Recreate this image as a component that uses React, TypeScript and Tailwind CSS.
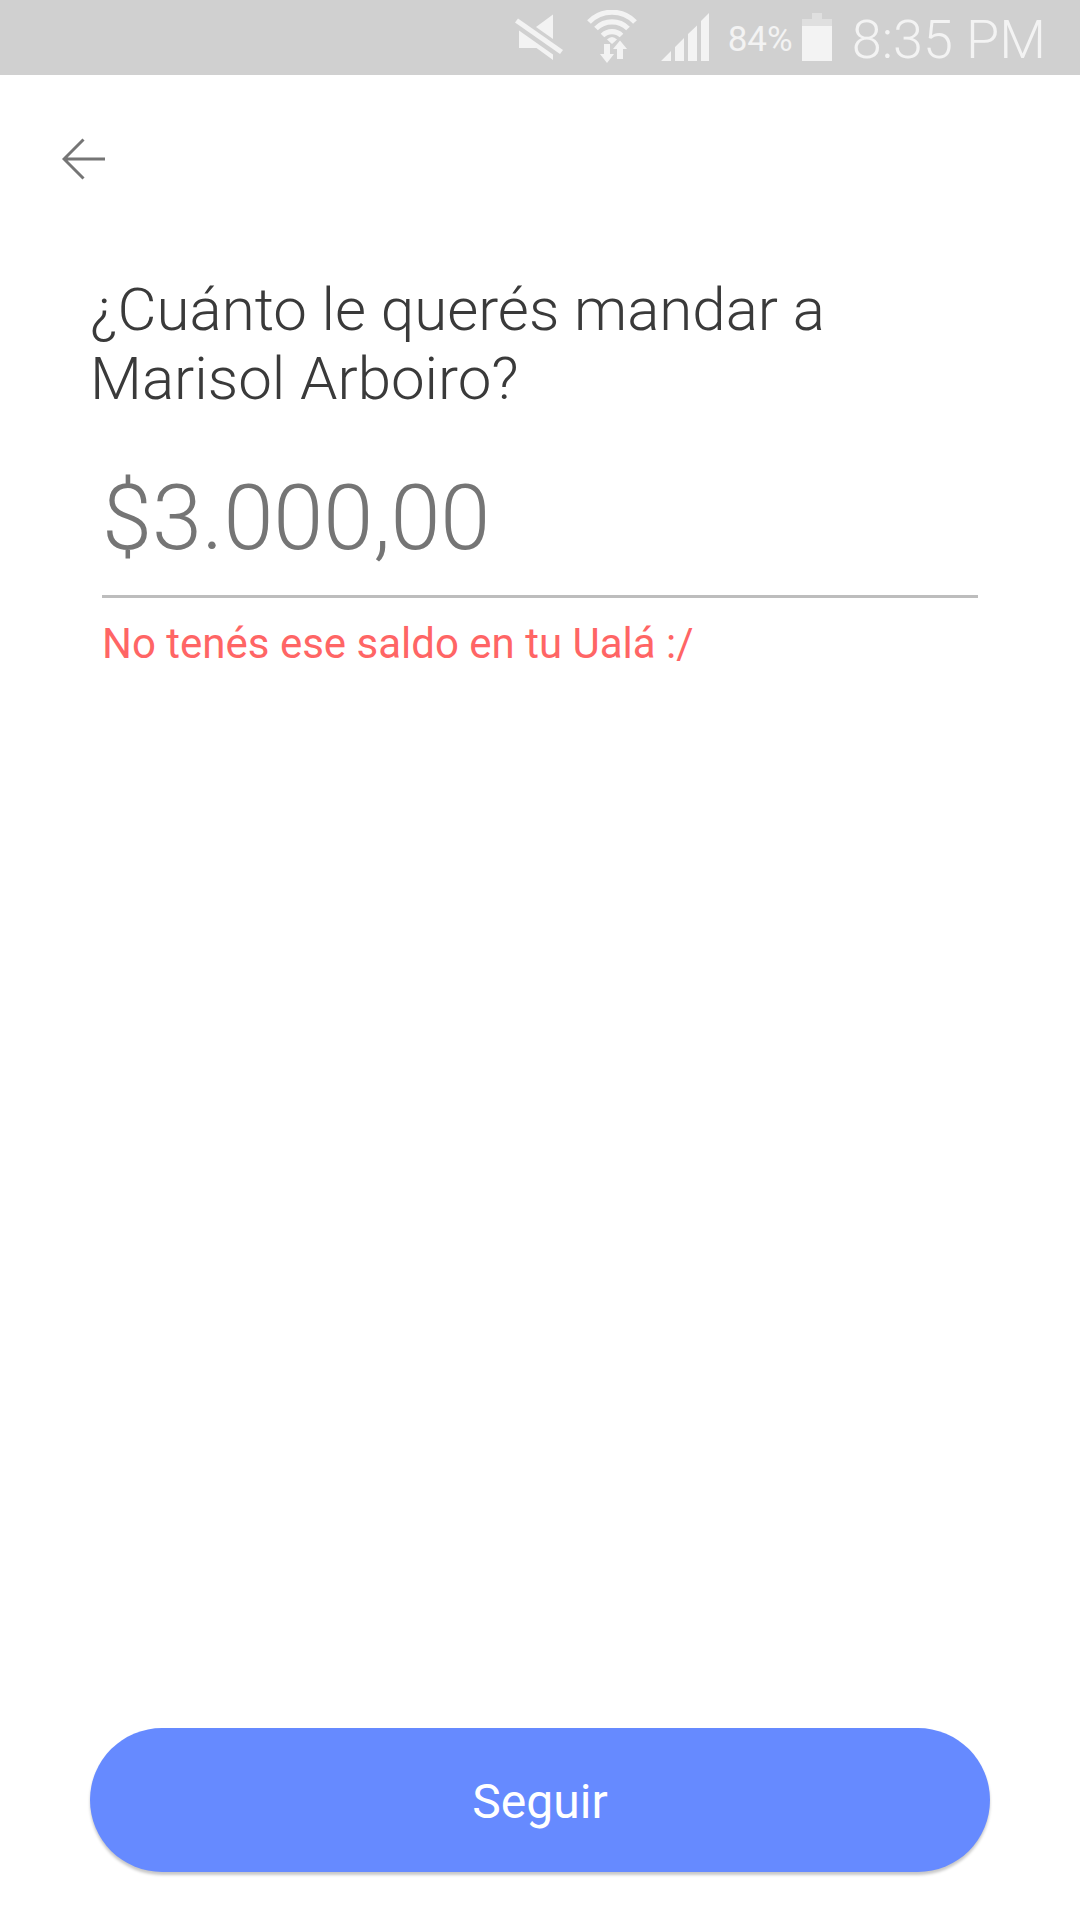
import React, { useState } from "react";

function MuteIcon() {
  return (
    <svg width="48" height="48" viewBox="0 0 48 48" fill="#f3f3f3" role="img" aria-label="Silencio">
      <path d="M21 14 38 1.500V26Z" />
      <path d="M4 17.500 38 41.500V47L21.500 35H4Z" />
      <path d="M3 5.500 48 37 45 41 0 9.500Z" />
    </svg>
  );
}

function WifiIcon() {
  return (
    <svg width="50" height="54" viewBox="0 0 50 54" role="img" aria-label="Wi-Fi">
      <g fill="none" stroke="#f3f3f3" strokeWidth="5.200">
        <path d="M2 12A32 32 0 0 1 48 12" />
        <path d="M9 18.500A22.800 22.800 0 0 1 41 18.500" />
        <path d="M15.500 25.500A13.600 13.600 0 0 1 34.500 25.500" />
      </g>
      <path d="M20 29.500Q25 24.500 30 29.500L25 34Z" fill="#f3f3f3" />
      <path d="M17 34H23V44H27L20 53 13 44H17Z" fill="#f3f3f3" />
      <path
        d="M30 49V39H26L33 30.500 40 39H36V49Z"
        fill="#f3f3f3"
        stroke="#d0d0d0"
        strokeWidth="1"
        paintOrder="stroke"
      />
    </svg>
  );
}

function SignalIcon() {
  return (
    <svg width="48" height="48" viewBox="0 0 48 48" fill="#f3f3f3" role="img" aria-label="Señal">
      <path d="M0 48 10 38V48ZM14 34 23 25V48H14ZM27 21 36 12.500V48H27ZM40 8 48 0V48H40Z" />
    </svg>
  );
}

function BatteryIcon() {
  return (
    <svg width="30" height="48" viewBox="0 0 30 48" role="img" aria-label="Batería">
      <path d="M10 0H20V6H30V13H0V6H10Z" fill="#dfdfdf" />
      <path d="M0 13H30V48H0Z" fill="#f3f3f3" />
    </svg>
  );
}

function BackIcon() {
  return (
    <svg width="44" height="42" viewBox="0 0 44 42" fill="none" stroke="#757575" strokeWidth="3" aria-hidden="true">
      <path d="M21.500 1.500 2 21 21.500 40.500M2 21H43" />
    </svg>
  );
}

export default function App() {
  const [amount, setAmount] = useState("$3.000,00");
  return (
    <div className="flex min-h-screen flex-col bg-white font-[Roboto,sans-serif]">
      <header className="flex h-[75px] items-center justify-end bg-[#d0d0d0] pb-px pr-[34px] text-[#f3f3f3]">
        <div className="flex items-center gap-6">
          <MuteIcon />
          <WifiIcon />
          <SignalIcon />
        </div>
        <span className="ml-[19px] pt-1.5 text-[35px] leading-[48px]">84%</span>
        <div className="ml-[9px]">
          <BatteryIcon />
        </div>
        <span className="ml-5 pt-1.5 text-[54px] font-light leading-[64px]">8:35 PM</span>
      </header>
      <nav className="flex px-[62px] pt-[63px]">
        <button type="button" aria-label="Volver">
          <BackIcon />
        </button>
      </nav>
      <main className="flex flex-1 flex-col px-[90px] pb-12 pt-[95px]">
        <h1 className="text-[60px] font-light leading-[69px] text-[#3a3a3a]">
          ¿Cuánto le querés mandar a Marisol Arboiro?
        </h1>
        <div className="mt-9 flex flex-col px-3">
          <input
            id="amount"
            aria-label="Monto"
            aria-describedby="amount-error"
            inputMode="decimal"
            value={amount}
            onChange={(e) => setAmount(e.target.value)}
            className="h-[149px] w-full border-b-[3px] border-[#bdbdbd] bg-transparent pb-2 text-[90px] font-light text-[#757575] outline-none"
          />
          <p id="amount-error" className="mt-5 text-[42px] leading-[52px] text-[#ff6565]">
            No tenés ese saldo en tu Ualá :/
          </p>
        </div>
        <button
          type="button"
          className="mt-auto h-36 rounded-full bg-[#668aff] pt-1 text-[48px] text-white shadow-[0_3px_3px_rgba(0,0,0,0.22)]"
        >
          Seguir
        </button>
      </main>
    </div>
  );
}
